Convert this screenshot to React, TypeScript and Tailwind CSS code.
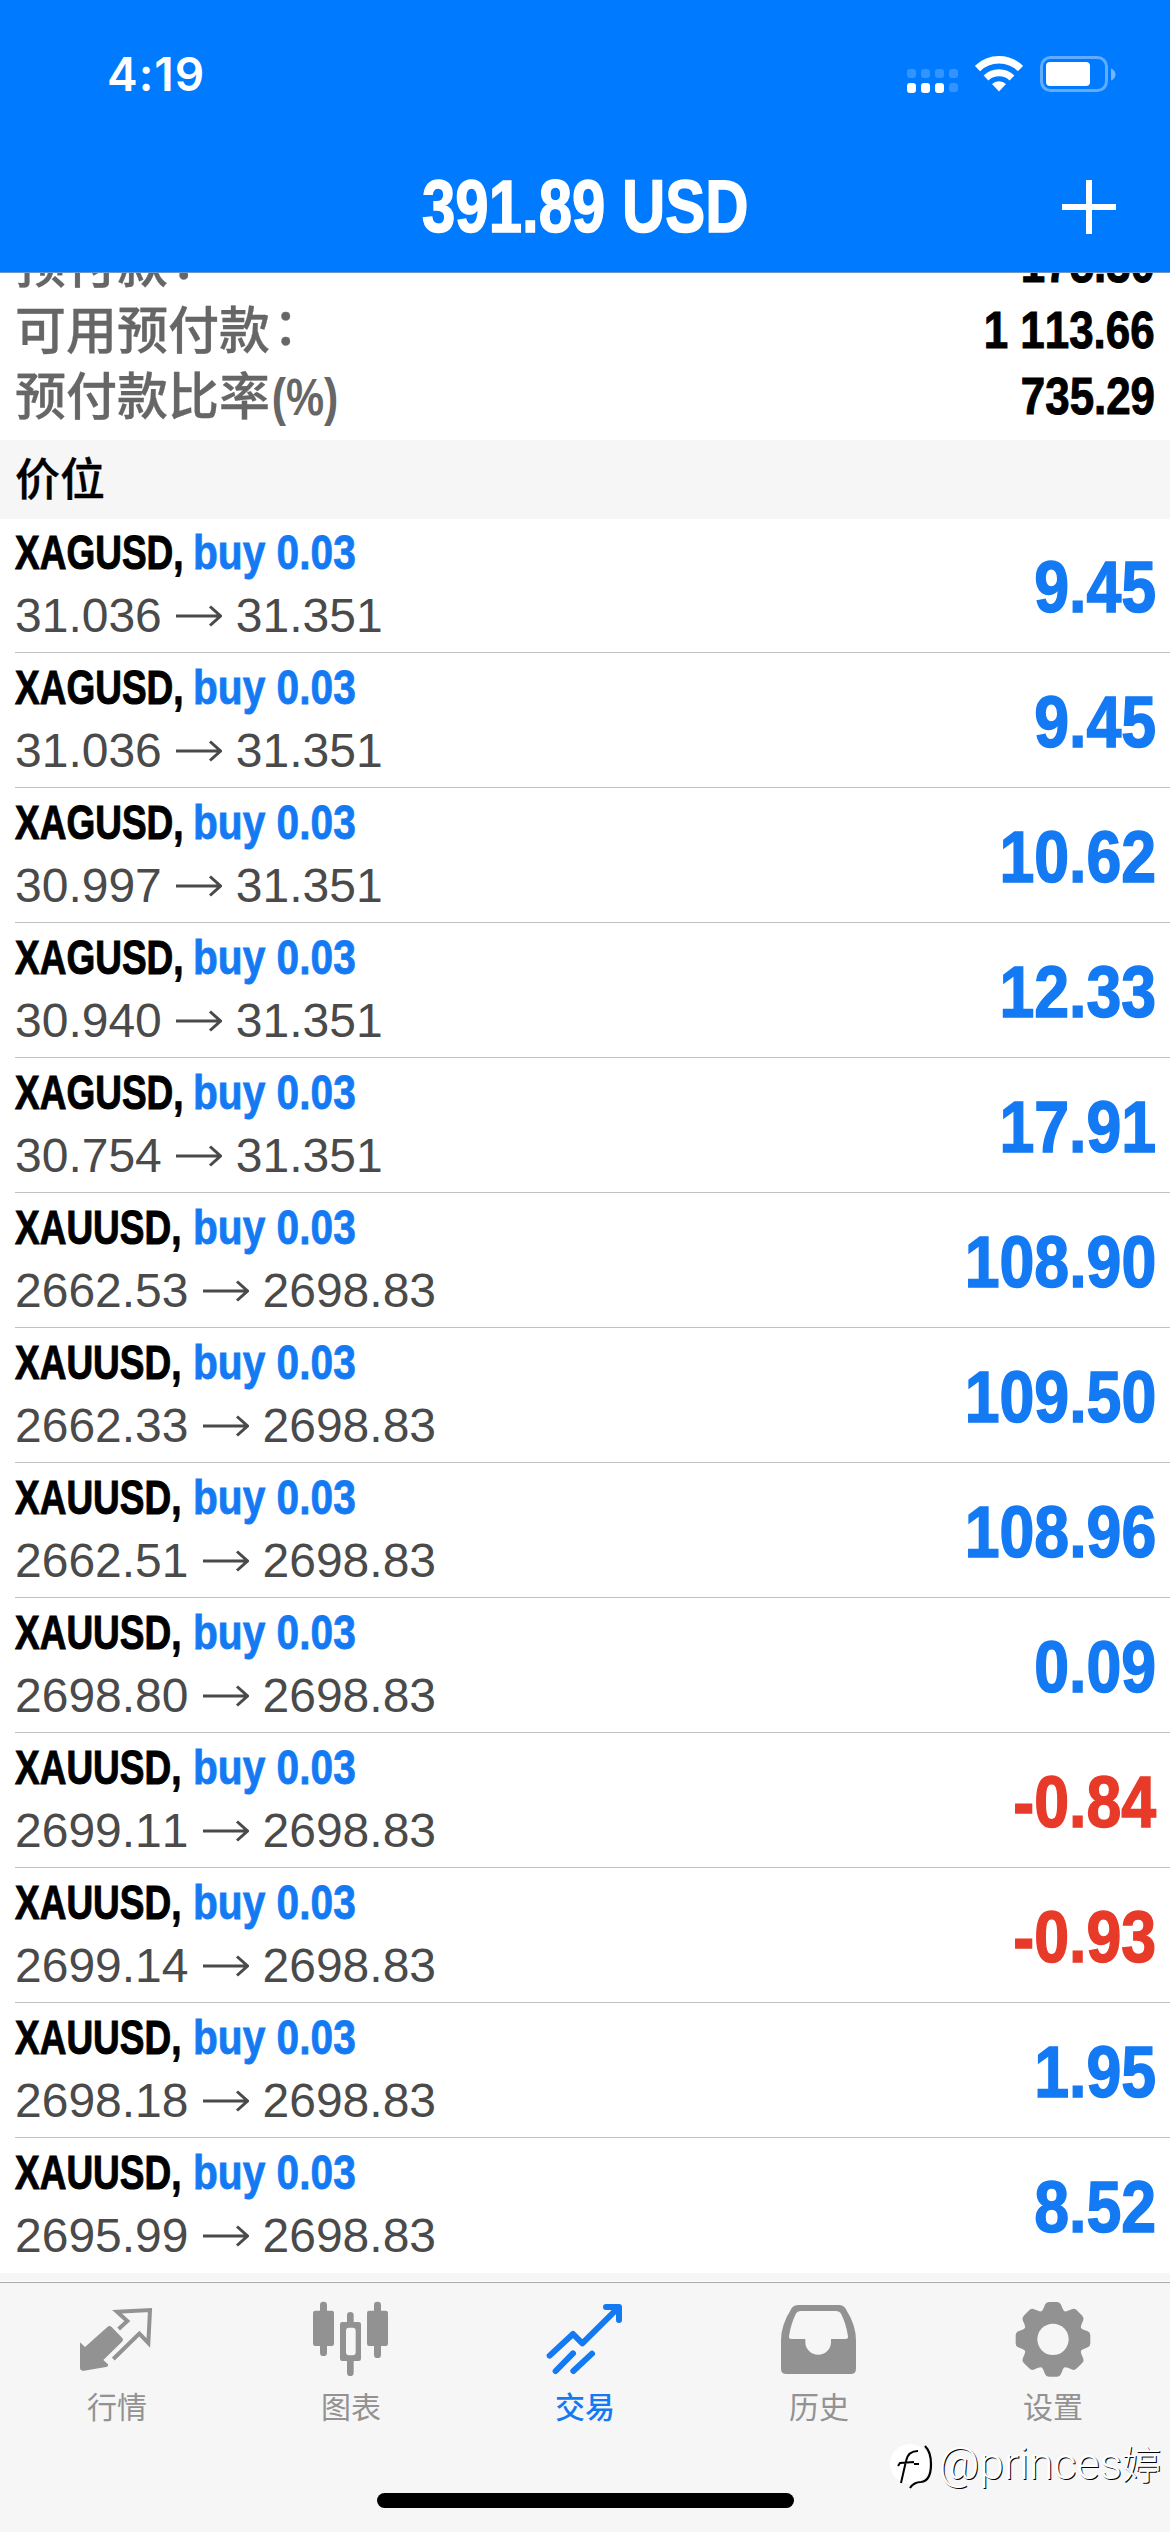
import React from 'react';

interface Position {
  symbol: string;
  volume: string;
  open: string;
  current: string;
  profit: string;
}

const positions: Position[] = [
  { symbol: 'XAGUSD', volume: '0.03', open: '31.036', current: '31.351', profit: '9.45' },
  { symbol: 'XAGUSD', volume: '0.03', open: '31.036', current: '31.351', profit: '9.45' },
  { symbol: 'XAGUSD', volume: '0.03', open: '30.997', current: '31.351', profit: '10.62' },
  { symbol: 'XAGUSD', volume: '0.03', open: '30.940', current: '31.351', profit: '12.33' },
  { symbol: 'XAGUSD', volume: '0.03', open: '30.754', current: '31.351', profit: '17.91' },
  { symbol: 'XAUUSD', volume: '0.03', open: '2662.53', current: '2698.83', profit: '108.90' },
  { symbol: 'XAUUSD', volume: '0.03', open: '2662.33', current: '2698.83', profit: '109.50' },
  { symbol: 'XAUUSD', volume: '0.03', open: '2662.51', current: '2698.83', profit: '108.96' },
  { symbol: 'XAUUSD', volume: '0.03', open: '2698.80', current: '2698.83', profit: '0.09' },
  { symbol: 'XAUUSD', volume: '0.03', open: '2699.11', current: '2698.83', profit: '-0.84' },
  { symbol: 'XAUUSD', volume: '0.03', open: '2699.14', current: '2698.83', profit: '-0.93' },
  { symbol: 'XAUUSD', volume: '0.03', open: '2698.18', current: '2698.83', profit: '1.95' },
  { symbol: 'XAUUSD', volume: '0.03', open: '2695.99', current: '2698.83', profit: '8.52' },
];

const StatusBar: React.FC = () => (
  <div className="flex h-[141px] items-start justify-between pl-[107px] pr-[52px]">
    <span className="mt-[46px] font-['Inter',sans-serif] text-[46px] leading-[56px] font-semibold tracking-[1px]">4:19</span>
    <div className="mt-[55px] flex items-start">
      <div className="mt-[14px] grid grid-cols-4 gap-x-[5px] gap-y-[5px]">
        {[0, 1, 2, 3, 4, 5, 6, 7].map((i) => (
          <span
            key={i}
            className={i > 3 && i < 7 ? 'h-[10px] w-[9px] rounded-[3px] bg-white' : 'h-[9px] w-[9px] rounded-[3px] bg-white/20'}
          />
        ))}
      </div>
      <svg className="ml-[17px] h-[37px] w-[48px]" viewBox="0 0 48 37" fill="none" stroke="#fff">
        <path d="M2.5 13.5a31 31 0 0 1 43 0" strokeWidth="7.5" />
        <path d="M11 23a19 19 0 0 1 26 0" strokeWidth="7" />
        <path d="M24 36.5l-7-7.5a10 10 0 0 1 14 0z" fill="#fff" stroke="none" />
      </svg>
      <svg className="ml-[17px] h-[38px] w-[78px]" viewBox="0 0 78 38" fill="none">
        <rect x="1.5" y="2.5" width="65" height="33" rx="9" stroke="#fff" strokeOpacity=".38" strokeWidth="3" />
        <rect x="6" y="7" width="44" height="24" rx="4" fill="#fff" />
        <path d="M71 13.5c6 2 6 10 0 12z" fill="#fff" fillOpacity=".45" />
      </svg>
    </div>
  </div>
);

const Header: React.FC = () => (
  <header className="relative z-10 h-[273px] shrink-0 border-b border-[#6c97c9] bg-[#007aff] text-white">
    <StatusBar />
    <div className="grid grid-cols-[1fr_auto_1fr] items-center">
      <span />
      <h1 className="w-[326px] origin-left scale-x-[.81] text-[74px] leading-[132px] font-bold whitespace-nowrap [-webkit-text-stroke:1.5px_#fff]">
        391.89 USD
      </h1>
      <svg className="mr-[54px] size-[54px] justify-self-end" viewBox="0 0 54 54" stroke="#fff" strokeWidth="6">
        <path d="M27 0v54M0 27h54" />
      </svg>
    </div>
  </header>
);

const SummaryRow: React.FC<{ label: string; suffix?: string; colon?: boolean; value: string }> = ({
  label,
  suffix,
  colon,
  value,
}) => (
  <div className="flex h-[66px] justify-between pr-[15px] pl-[15px] text-[51px] leading-[68px]">
    <span className="flex pt-px font-medium text-[#666] [-webkit-text-stroke:0.3px_#666]">
      {label}
      {colon && <span className="-mt-1 ml-[3px]">：</span>}
      {suffix && <span className="origin-left scale-x-[.84] pl-[2px] font-bold [-webkit-text-stroke:0px]">{suffix}</span>}
    </span>
    <span className="origin-right scale-x-[.86] font-bold text-black [font-kerning:none] [-webkit-text-stroke:1px_#000]">{value}</span>
  </div>
);

const PositionRow: React.FC<{ position: Position }> = ({ position }) => (
  <div className="ml-[15px] flex h-[135px] justify-between border-b border-[#c2c2c4] pr-[14px] last:border-transparent">
    <div className="pt-[3px]">
      <div className="flex text-[49px] leading-[63px] font-bold whitespace-nowrap">
        <span className="w-[178px] origin-left scale-x-[.755] text-black [-webkit-text-stroke:1px_#000]">{position.symbol},</span>
        <span className="origin-left scale-x-[.83] text-[#147af3] [-webkit-text-stroke:0.8px_#147af3]">buy {position.volume}</span>
      </div>
      <div className="flex items-center text-[48px] leading-[64px] text-[#4a4a4a] [font-kerning:none]">
        {position.open}
        <svg className="mx-[14px] h-[22px] w-[46px]" viewBox="0 0 46 22" fill="none" stroke="currentColor" strokeWidth="3">
          <path d="M0 11h44M34 1.5L44.5 11 34 20.5" />
        </svg>
        {position.current}
      </div>
    </div>
    <span
      className={`origin-right scale-x-[.87] pt-[3px] text-[72px] leading-[132px] font-bold [font-kerning:none] [-webkit-text-stroke:1.5px] ${
        position.profit.startsWith('-') ? 'text-[#e83a29]' : 'text-[#147af3]'
      }`}
    >
      {position.profit}
    </span>
  </div>
);

const QuotesIcon: React.FC = () => (
  <svg className="size-[78px]" viewBox="234 150 234 234" fill="none">
    <path
      d="M240 277l15 14 68-61q6-5 12 1l31 32q6 6 0 12l-56 55 14 13q2 7-6 8l-66 11q-12 1-12-9z"
      fill="currentColor"
    />
    <path d="M356 237l26-24-31-28 99-5-5 99-27-28-78 76" stroke="currentColor" strokeWidth="12" />
  </svg>
);

const ChartIcon: React.FC = () => (
  <svg className="size-[78px]" viewBox="936 150 234 234" fill="currentColor">
    <rect x="960" y="155" width="21" height="163" rx="10" />
    <rect x="939" y="182" width="63" height="106" rx="7" />
    <rect x="1122" y="155" width="21" height="169" rx="10" />
    <rect x="1101" y="182" width="63" height="106" rx="7" />
    <rect x="1041" y="186" width="20" height="50" rx="10" />
    <rect x="1041" y="320" width="20" height="58" rx="10" />
    <rect x="1020" y="216" width="63" height="117" rx="7" />
    <rect x="1038" y="233" width="29" height="83" rx="9" fill="#f6f6f6" />
  </svg>
);

const TradeIcon: React.FC = () => (
  <svg
    className="size-[78px]"
    viewBox="318 150 234 234"
    fill="none"
    stroke="currentColor"
    strokeWidth="18"
    strokeLinecap="round"
    strokeLinejoin="round"
  >
    <path d="M329 317l70-65 28 28 108-107M498 171h39v39" />
    <path d="M399 310l-52 53M456 311l-56 52" />
  </svg>
);

const HistoryIcon: React.FC = () => (
  <svg className="size-[78px]" viewBox="1020 150 234 234" fill="none">
    <path
      d="M1076 165h121q12 0 19 10 32 50 32 96v85q0 16-16 16h-193q-16 0-16-16v-85q0-46 32-96 7-10 21-10z"
      fill="currentColor"
    />
    <path
      d="M1083 183h103q13 0 18 10 14 28 20 66 1 8-7 8h-44v9a38 38 0 0 1-77 0v-9h-42q-8 0-7-8 6-38 20-66 5-10 16-10z"
      fill="#f6f6f6"
    />
  </svg>
);

const SettingsIcon: React.FC = () => (
  <svg className="size-[78px]" viewBox="-117 -118 234 234" fill="currentColor">
    {[0, 45, 90, 135, 180, 225, 270, 315].map((angle) => (
      <path
        key={angle}
        transform={`rotate(${angle})`}
        d="M-44-78q12-4 16-16l4-10q3-8 12-8h24q9 0 12 8l4 10q4 12 16 16z"
      />
    ))}
    <circle r="88" />
    <circle r="47" fill="#f6f6f6" />
  </svg>
);

const tabs = [
  { label: '行情', icon: QuotesIcon },
  { label: '图表', icon: ChartIcon },
  { label: '交易', icon: TradeIcon, active: true },
  { label: '历史', icon: HistoryIcon },
  { label: '设置', icon: SettingsIcon },
];

const TabBar: React.FC = () => (
  <nav className="relative z-10 flex h-[250px] shrink-0 flex-col items-center border-t border-[#a9a9a9] bg-[#f6f6f6]">
    <div className="grid w-full grid-cols-5">
      {tabs.map(({ label, icon: Icon, active }) => (
        <div
          key={label}
          className={`flex flex-col items-center pt-[17px] ${active ? 'font-medium text-[#147af3]' : 'text-[#929292]'}`}
        >
          <Icon />
          <span className="mt-[8px] text-[30px] leading-[44px]">{label}</span>
        </div>
      ))}
    </div>
    <div className="mt-[63px] h-[15px] w-[417px] rounded-full bg-black" />
  </nav>
);

const Watermark: React.FC = () => (
  <div className="absolute right-[9px] bottom-[40px] z-20 flex items-center text-white">
    <svg className="h-[52px] w-[50px]" viewBox="0 0 50 52" fill="none">
      <circle cx="21" cy="25" r="20" fill="#fff" />
      <path d="M12 44l5-22q2-10 12-10M9 27l2-3 14-1M25 25h5" stroke="#000" strokeWidth="2" />
      <path d="M36 7q6 6 6 18 0 17-10 18-7 0-11 6" stroke="#000" strokeWidth="2.2" />
    </svg>
    <span className="font-['Roboto','Noto_Sans_CJK_SC',sans-serif] text-[44.5px] leading-[52px] font-light [text-shadow:1px_1px_0_#000]">
      @princes<span className="text-[39px]">婷</span>
    </span>
  </div>
);

const App: React.FC = () => {
  return (
    <div className="relative flex h-[2532px] w-[1170px] flex-col overflow-hidden bg-white font-['Liberation_Sans','Noto_Sans_CJK_SC',sans-serif]">
      <Header />
      <main className="-mt-[42px] h-[2051px] shrink-0 bg-white">
        <div className="h-[209px]">
          <SummaryRow label="预付款" colon value="175.30" />
          <SummaryRow label="可用预付款" colon value="1 113.66" />
          <SummaryRow label="预付款比率" suffix="(%)" value="735.29" />
        </div>
        <h2 className="h-[79px] bg-[#f6f6f6] px-[15px] pt-[2px] text-[45px] leading-[78px] font-medium text-black [-webkit-text-stroke:0.3px_#000]">
          价位
        </h2>
        <div className="-mt-px">
          {positions.map((position, i) => (
            <PositionRow key={i} position={position} />
          ))}
        </div>
        <div className="h-[8px] bg-[#f6f6f6]" />
      </main>
      <TabBar />
      <Watermark />
    </div>
  );
};

export default App;
